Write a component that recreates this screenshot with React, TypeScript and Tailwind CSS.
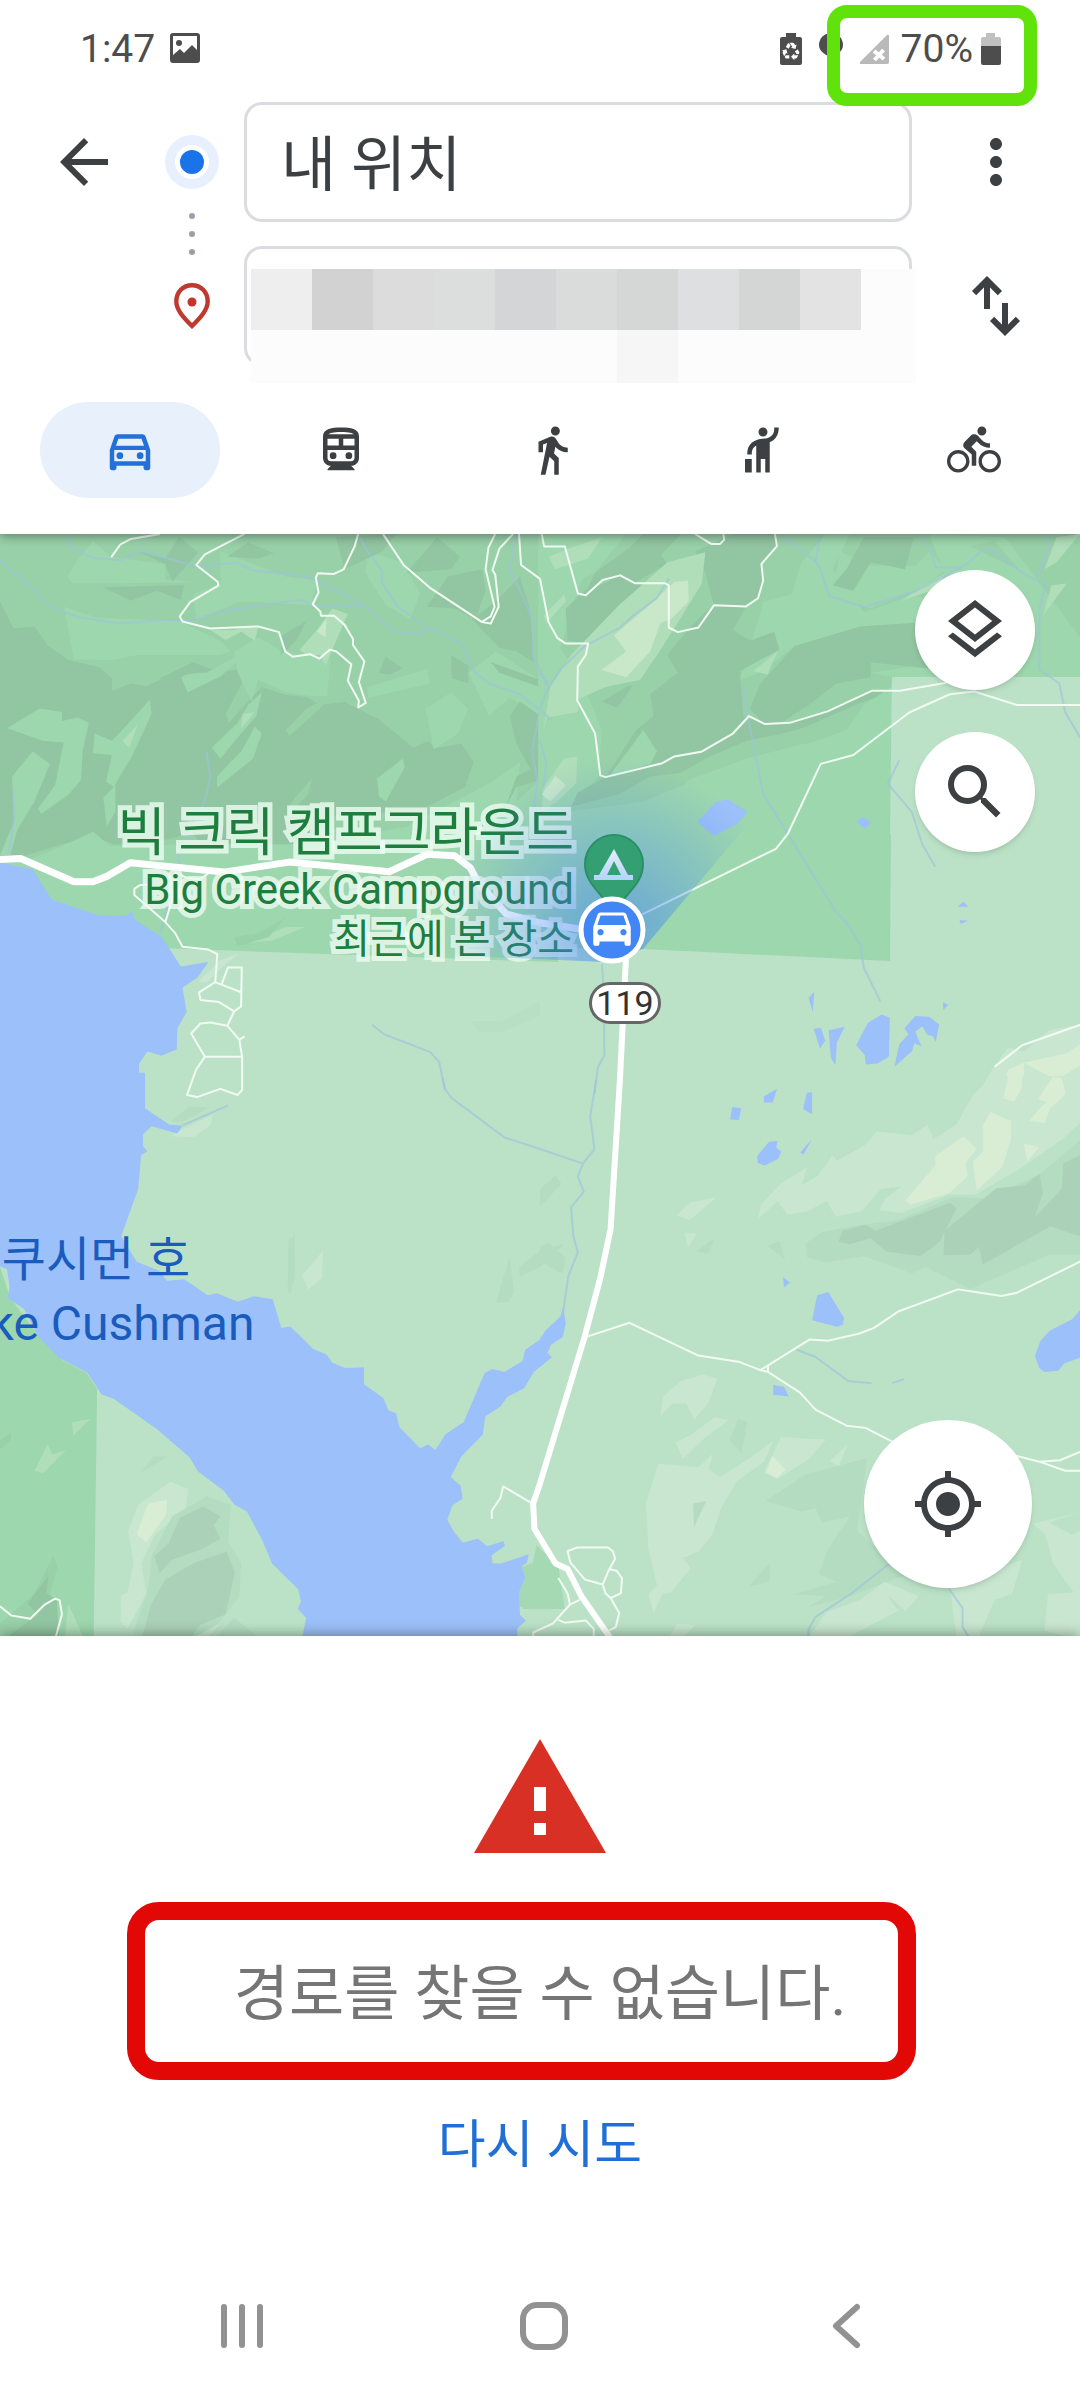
import {
  MdArrowBack,
  MdDirectionsBike,
  MdDirectionsCar,
  MdDirectionsWalk,
  MdHail,
  MdMoreVert,
  MdMyLocation,
  MdOutlineDirectionsCar,
  MdOutlineDirectionsSubway,
  MdOutlineLayers,
  MdRecycling,
  MdSearch,
  MdWarning,
} from 'react-icons/md';
import clsx from 'clsx';
import type { ElementType } from 'react';

interface TravelMode {
  label: string;
  icon: ElementType;
}

const travelModes: TravelMode[] = [
  { label: '자동차', icon: MdOutlineDirectionsCar },
  { label: '대중교통', icon: MdOutlineDirectionsSubway },
  { label: '도보', icon: MdDirectionsWalk },
  { label: '택시', icon: MdHail },
  { label: '자전거', icon: MdDirectionsBike },
];

const mosaicTop = [
  'bg-[#eeeeee]',
  'bg-[#d2d2d2]',
  'bg-[#dddcdc]',
  'bg-[#dcdedd]',
  'bg-[#d4d5d7]',
  'bg-[#dadcdb]',
  'bg-[#d5d7d6]',
  'bg-[#dedfe1]',
  'bg-[#d4d6d5]',
  'bg-[#e3e3e3]',
  'bg-[#fcfcfc]',
];

// The map is four tiles, each with its own coordinate space
const NW = 'translate(0 -4) scale(.3444 .3571)';
const NE = 'translate(540 -4) scale(.3444 .3571)';
const SW = 'translate(0 546) scale(.3444 .3635)';
const SE = 'translate(540 546) scale(.3444 .3635)';

const WATER = '#9cc0f9';
const LIGHT = '#9dd7ae';
const MID = '#98d0a8';
const DARK = '#92c5a1';
const PALE = '#b0deb9';
const SAND = '#c9e7c9';
const L_PALE = '#c9e7d0';
const L_SAND = '#d9edd4';
const L_MID = '#b4dcc1';
const L_DARK = '#abd1b8';

interface TileData {
  transform: string;
  land: [string, string][];
  water: string[];
  streams: string[];
  roads: string[];
}

const tiles: TileData[] = [
  {
    transform: NW,
    land: [
      [MID, '0,0 1600,0 1600,560 1568,900 1200,860 900,830 500,880 100,920 0,930'],
      [DARK, '0,200 40,275 100,270 140,325 200,365 290,385 325,415 325,450 380,430 425,437 500,405 560,390 640,400 690,390 760,440 830,462 890,468 930,490 1000,482 1100,530 1200,610 1245,590 1260,612 1340,598 1375,650 1350,720 1250,770 1200,800 1000,780 900,860 840,890 600,900 560,850 420,880 330,880 270,860 180,880 60,915 0,910'],
      [LIGHT, '185,215 280,245 520,255 640,310 670,340 640,350 400,350 320,365 215,362'],
      [LIGHT, '195,130 225,85 270,30 320,75 480,95 480,140 570,145 340,150 210,150'],
      [LIGHT, '640,60 830,130 920,140 905,210 700,200 570,250 560,180 640,150'],
      [LIGHT, '20,555 115,500 180,510 180,535 225,525 258,540 240,620 235,700 200,740 120,795 110,780 160,715 165,690 185,595 125,590'],
      [LIGHT, '35,690 95,620 145,655 100,760 50,840 30,910 0,910 40,820'],
      [LIGHT, '275,570 325,590 370,545 435,475 440,515 385,630 330,720 308,705 325,630 270,625'],
      [LIGHT, '300,750 335,715 335,790 310,830'],
      [LIGHT, '520,400 600,400 690,350 740,310 700,360 640,410 545,455'],
      [MID, '655,515 710,415 760,440 720,480 665,540'],
      [LIGHT, '615,610 690,540 720,490 760,455 745,520 700,570 640,640'],
      [LIGHT, '630,690 700,620 740,550 760,570 735,640 630,722'],
      [MID, '830,560 890,500 930,480 940,490 840,577'],
      [LIGHT, '680,340 750,300 820,340 960,360 950,465 900,465 830,455 750,420 730,480 690,400'],
      [MID, '835,780 860,745 905,698 895,740 845,790'],
      [LIGHT, '1095,695 1170,640 1175,665 1120,760 1100,745'],
      [LIGHT, '1235,500 1310,455 1360,500 1330,570 1260,615'],
      [LIGHT, '1065,440 1240,390 1250,430 1070,470'],
      [LIGHT, '1070,60 1170,90 1220,180 1190,250 1120,210 1060,120'],
      [LIGHT, '1180,830 1300,770 1420,710 1510,650 1500,760 1568,700 1620,980 1400,930'],
      [LIGHT, '0,920 80,925 180,885 270,845 320,885 600,880 900,880 1180,830 1620,900 1620,1210 440,1170 200,1060'],
      [LIGHT, '1360,400 1440,340 1568,420 1568,520 1480,470 1420,520'],
      [DARK, '400,60 480,80 520,20 575,62 500,145 480,95'],
      [DARK, '660,75 720,35 795,65 750,80'],
      [DARK, '300,160 535,155 525,195 455,170 380,198'],
      [DARK, '465,415 560,370 620,392 540,405 470,440'],
      [DARK, '975,20 1150,11 1110,60 1000,110'],
      [DARK, '1180,120 1270,20 1335,75 1310,110 1240,115'],
      [DARK, '1240,215 1300,130 1400,110 1410,170 1380,250 1320,220'],
      [DARK, '1370,250 1440,200 1510,130 1540,230 1550,370 1500,340 1450,330'],
      [DARK, '1100,400 1120,355 1168,388 1130,405'],
      [DARK, '1425,370 1568,420 1568,440 1450,400'],
      [DARK, '1310,350 1360,380 1360,430 1312,415'],
      [DARK, '1480,520 1510,480 1568,520 1568,700 1500,720 1470,770 1500,690 1540,670 1500,600'],
      [DARK, '815,350 820,295 890,255 860,310'],
      [PALE, '870,335 920,280 965,220 1010,235 985,290 945,380 930,350 890,350'],
      [SAND, '920,285 948,248 945,300'],
      [PALE, '610,280 680,280 700,275 750,272 740,310 700,285 655,308'],
      [PALE, '700,555 705,515 740,510'],
      [PALE, '355,590 400,545 375,610'],
      [PALE, '725,1155 830,1112 885,1112 790,1150'],
      [MID, '680,1140 750,1130 830,1085 780,1140 690,1165'],
      [L_PALE, '575,1265 640,1205 695,1185 650,1220 600,1268'],
      ['#b7dfc4', '1365,1375 1460,1375 1568,1318 1568,1360 1460,1405 1390,1405'],
    ],
    water: [
      '-10,930 95,950 150,1035 290,1080 365,1080 385,1068 390,1090 470,1140 525,1222 605,1210 575,1252 530,1282 542,1350 515,1395 513,1455 468,1472 428,1460 404,1495 404,1528 421,1548 421,1600 -10,1600',
    ],
    streams: [
      'M190 11 205 45 240 65 268 78 350 85 410 58 570 102 690 92 730 112 890 130 1050 205 1145 285 1225 290 1255 275 1340 320 1380 400 1420 430 1510 460 1600 530',
      'M0 85 60 135 155 220 230 245 350 262 470 252 570 252 640 228 870 195 915 212 1050 212',
      'M1045 20 1060 50 1110 115 1110 150 1155 215 1250 280',
      'M600 622 610 690 600 740 580 800 550 850 520 900 520 960',
      'M38 730 42 800 25 910M490 1040 465 1130',
      'M1500 11 1480 110 1520 190 1550 260 1545 350 1590 430',
      'M1565 510 1545 620 1560 700 1550 780 1600 900',
      'M1080 1385 1115 1412 1250 1462 1275 1490 1292 1568',
    ],
    roads: [
      'M465 11 380 25 350 40 323 76',
      'M710 11 595 68 570 98 632 145 634 156 552 202 522 242 530 256 610 276 750 270 810 286 828 340 850 355 900 348 928 360 958 335 977 340 1020 376 1010 422 1042 478 1040 497 1062 484 1042 426 1058 368 1025 322 1025 305 1000 265 970 240 932 240 930 228 908 208 925 175 917 133 923 121 970 123 998 110 1030 45 1040 11',
      'M1112 11 1172 98 1250 163 1400 258 1425 262 1448 215 1438 125 1430 112 1450 52 1490 11M1438 11 1418 50 1410 110 1436 215 1425 242 1398 258',
      'M1507 11 1513 98 1568 137',
      'M430 993 405 995 390 1005 390 1022 480 1098 508 1128 530 1167 605 1175 631 1188 625 1266 578 1295 582 1316 636 1322 680 1348 700 1334 702 1225 662 1225 643 1273 625 1266M643 1273 702 1295M480 1098 500 1035 510 960 545 975 580 978 605 962',
      'M680 1348 660 1388 612 1379 582 1382 555 1410 595 1475 570 1510 543 1582 572 1588 640 1565 690 1582 703 1568 703 1475 695 1428 660 1388M595 1475 703 1475M695 1428 710 1418',
    ],
  },
  {
    transform: NE,
    land: [
      [MID, '-5,0 1568,0 1568,412 1023,412 1000,560 760,600 600,640 300,760 -5,800'],
      [LIGHT, '-5,0 170,11 100,200 60,330 120,420 180,560 170,690 100,760 -5,900'],
      [LIGHT, '110,11 250,11 160,120 100,150 40,40'],
      [LIGHT, '650,200 730,180 760,90 830,11 900,11 850,110 940,230 1090,180 1180,230 1090,262 930,270 740,325 640,400 580,420'],
      [LIGHT, '870,60 960,100 1090,100 1130,60 1180,110 1110,160 960,220 850,180'],
      [LIGHT, '1130,11 1350,20 1568,300 1568,412 1023,412 960,400 1090,380 1400,340 1200,180'],
      [DARK, '160,120 260,50 300,11 410,11 350,70 370,95 270,150 180,138 130,180'],
      [DARK, '450,60 560,11 685,11 690,45 645,95 650,150 635,190 600,212 560,280 610,310 680,285 695,335 580,395 590,520 600,525 650,542 725,540 830,508 965,450 1050,445 940,480 760,555 695,572 600,590 480,640 410,680 320,690 230,740 90,775 110,735 190,692 280,560 330,520 320,460 400,400 370,350 420,290 480,230 505,210 480,120'],
      [DARK, '610,500 640,430 740,325 930,270 1090,260 1200,300 1150,390 960,370 960,412 860,430 780,490 700,540 650,542'],
      [DARK, '75,220 130,170 240,130 280,150 370,150 290,220 200,270 140,318 80,310'],
      [DARK, '940,20 1085,20 1060,110 960,90 910,170 850,155 890,110'],
      [DARK, '180,480 250,440 270,435 225,498'],
      [MID, '1250,45 1320,30 1390,110 1320,80'],
      [LIGHT, '200,690 270,600 300,560 340,620 320,655'],
      [PALE, '10,560 30,440 90,350 150,290 230,210 370,90 480,62 470,150 400,260 340,350 290,420 190,440 110,475 110,510 20,525'],
      [PALE, '25,75 90,50 180,20 140,80 45,110'],
      [PALE, '10,240 70,180 75,200 20,260'],
      [PALE, '1465,110 1500,20 1568,11 1500,90'],
      [PALE, '1460,240 1485,155 1530,150'],
      [PALE, '1050,198 1090,170 1180,120 1150,165'],
      [PALE, '620,395 690,340 660,405'],
      [PALE, '10,720 70,640 108,635 105,710 50,760 5,790'],
      [SAND, '178,392 250,340 215,295 330,200 390,145 430,142 432,200 380,250 350,260 320,340 250,412'],
      [SAND, '5,740 45,688 75,715 30,760'],
      [LIGHT, '110,800 400,740 430,700 600,640 760,605 890,560 940,490 1020,440 1015,1200 300,1170'],
      [L_PALE, '1270,1580 1320,1500 1360,1450 1405,1460 1480,1400 1600,1380 1600,1580'],
      [L_SAND, '1340,1580 1360,1510 1405,1492 1405,1580'],
      [L_SAND, '1405,1492 1530,1465 1600,1420 1600,1480 1500,1540'],
    ],
    water: [
      '457,818 510,762 545,755 602,788 575,822 505,856',
      '918,818 938,803 963,820 943,836',
      '1212,1055 1230,1041 1243,1055',
      '1218,1092 1243,1094 1222,1103',
      '780,1310 796,1294 792,1350',
      '795,1397 816,1394 828,1430 813,1453',
      '838,1401 885,1391 862,1435 858,1498 845,1480',
      '918,1443 952,1380 992,1357 1016,1366 1013,1475 980,1494 946,1497 943,1470',
      '1029,1503 1043,1440 1070,1412 1058,1395 1090,1361 1130,1363 1159,1385 1149,1433 1140,1417 1125,1414 1110,1390 1090,1405 1107,1445 1087,1437 1080,1460',
      '1170,1322 1185,1330 1171,1344',
    ],
    streams: [
      'M700 15 790 80 810 100 840 185 940 216 1090 172 1240 95 1285 55 1310 55 1400 120 1468 155 1450 220 1450 390 1508 430 1525 510 1568 580',
      'M815 15 800 90M1100 15 1130 50 1150 105 1225 105M1480 15 1470 70 1445 130',
      'M375 135 340 190 270 240 230 275 130 325 60 390 20 450 0 500M0 400 25 440',
      'M588 435 605 530 648 740 770 930 860 1070 890 1100 930 1160 940 1225 988 1320',
      'M1043 645 1010 710 1080 790 1110 880 1148 943',
      'M180 1215 185 1290 187 1470 168 1505 158 1580M0 590 18 650 10 720',
    ],
    roads: [
      'M5 11 12 46 72 46 110 178 133 183 182 140 233 127 275 149 362 149 374 155 374 273 400 286 460 273 505 211 598 214 633 191 648 142 643 95 688 45 682 11',
      'M450 11 497 39 523 39 535 27 532 11',
      'M0 137 25 258 50 302 75 318 140 318 133 350 110 382 108 477 160 570 175 687 190 692 355 653 390 634 468 621 560 570 607 521 652 543 725 540 835 508 965 450 1045 450 1180 428',
      'M295 1077 685 893 720 850 815 655 910 630 1072 511 1190 460 1260 452 1385 490 1600 490',
      'M1600 1375 1400 1443 1320 1503',
    ],
  },
  {
    transform: SW,
    land: [
      [LIGHT, '-5,500 30,600 110,700 180,770 250,805 282,850 272,1540 -5,1540'],
      [MID, '-5,995 32,970 32,990 -5,1020'],
      [PALE, '100,1075 138,1002 152,1030 192,1018 125,1082'],
      [PALE, '208,942 263,932 213,978'],
      [MID, '100,1412 155,1308 167,1340 145,1410 60,1540 -5,1540 -5,1500'],
      [DARK, '80,1440 140,1365 135,1412 165,1430 172,1540 10,1540 110,1470'],
      [PALE, '198,1440 245,1540 188,1540'],
      [L_PALE, '372,1240 400,1170 495,1105 546,1125 540,1180 450,1250 410,1330 425,1412 370,1510 350,1490 352,1418 370,1410 388,1330'],
      [L_SAND, '397,1250 430,1165 485,1155 482,1195 425,1272'],
      [L_MID, '440,1310 500,1200 600,1145 670,1170 662,1270 700,1330 695,1420 600,1540 380,1540 430,1400'],
      [L_DARK, '448,1310 490,1275 522,1205 590,1173 640,1200 620,1225 640,1262 580,1293 500,1320 463,1357'],
      [L_DARK, '410,1540 440,1440 480,1375 560,1330 658,1297 682,1355 655,1470 580,1500 550,1540'],
      [L_PALE, '550,1540 640,1493 600,1540'],
      [L_MID, '620,1540 680,1480 760,1540'],
      [L_MID, '835,580 838,440 856,425 855,545 842,592'],
      [L_PALE, '878,537 938,470 935,545 895,576'],
      [L_PALE, '498,155 530,135 618,95 610,125 565,157'],
      [L_MID, '495,115 550,72 610,75 530,115'],
      [L_MID, '1440,612 1480,485 1493,585 1475,612'],
      [L_MID, '1507,515 1568,470 1640,450 1568,515 1510,540'],
      [L_MID, '410,1080 445,1035 490,1035'],
      ['#a5d9b3', '1507,1450 1507,1410 1525,1370 1515,1340 1568,1320 1620,1330 1640,1455'],
    ],
    water: [
      '-10,-20 421,-20 421,78 492,123 530,125 515,147 440,127 415,150 415,182 428,195 410,207 401,300 352,430 397,500 462,525 485,552 535,548 603,592 630,587 690,610 738,595 792,603 817,682 843,678 910,740 948,755 965,778 1003,792 1057,790 1057,837 1113,875 1127,908 1150,917 1160,955 1220,1013 1243,1003 1265,1018 1293,975 1347,940 1407,806 1430,795 1465,803 1517,773 1525,742 1578,708 1580,780 1550,803 1522,848 1473,872 1453,898 1409,926 1402,975 1340,1035 1309,1092 1338,1117 1343,1152 1314,1170 1299,1210 1316,1240 1344,1273 1387,1262 1415,1283 1462,1268 1466,1282 1427,1308 1430,1330 1455,1330 1535,1305 1530,1328 1515,1338 1525,1370 1507,1410 1510,1472 1527,1487 1502,1508 1502,1545 875,1545 889,1480 865,1455 874,1433 865,1400 790,1330 762,1267 717,1187 680,1168 650,1130 575,1077 550,1038 455,960 330,877 295,865 253,805 172,765 110,705 70,630 22,600 28,570 20,520 -10,510',
    ],
    streams: ['M530 125 662 70', 'M1285 -5 1292 25 1312 50 1465 158 1568 190'],
    roads: [
      'M0 1448 33 1473 88 1482 130 1443 160 1427 173 1431 180 1470 161 1535',
      'M1428 1207 1428 1185 1453 1150 1461 1118 1545 1165',
    ],
  },
  {
    transform: SE,
    land: [
      [L_PALE, '635,380 640,345 700,285 775,240 760,290 805,265 850,208 862,222 945,178 978,142 1080,152 1125,123 1142,163 1210,122 1255,45 1310,-10 1600,-10 1600,90 1520,160 1400,240 1265,315 1190,315 1050,365 985,358 1000,330 1050,292 990,300 935,360 860,376 832,333 775,362 718,370 690,333'],
      [L_SAND, '1062,330 1148,235 1148,210 1230,155 1268,190 1235,228 1242,265 1190,310 1075,343'],
      [L_SAND, '1257,225 1287,195 1286,125 1308,88 1368,113 1367,165 1342,240 1268,303'],
      [L_SAND, '1345,50 1360,-10 1400,-10 1398,25 1375,60'],
      [L_SAND, '1447,52 1490,-10 1515,-5 1527,38 1480,80 1465,118 1420,112 1470,60'],
      [L_SAND, '1405,175 1450,185 1415,222'],
      [L_MID, '770,450 820,418 920,400 1040,385 1200,322 1300,325 1450,260 1600,140 1600,480 1480,480 1250,575 1120,515 1080,532 940,485 830,502 775,488'],
      [L_DARK, '867,445 878,415 945,398 975,415 1190,338 1210,352 1160,445 1105,484 1005,472 960,435 900,452'],
      [L_DARK, '1172,482 1175,415 1325,298 1408,290 1450,257 1460,310 1437,377 1515,300 1520,230 1600,190 1600,440 1482,402 1285,508 1275,458 1250,480'],
      [L_PALE, '398,373 435,337 512,323 435,385'],
      [L_PALE, '420,420 455,422 430,460'],
      [L_MID, '452,472 505,437 490,478'],
      [L_MID, '660,457 695,443 712,493'],
      [L_MID, '0,300 45,263 62,285 0,350'],
      [L_MID, '0,460 25,448 75,490 65,532 0,500'],
      [L_PALE, '350,924 357,872 410,828 475,810 514,822 490,887 448,933 424,890 385,890'],
      [L_PALE, '394,997 440,975 508,927 546,937 478,985 415,1042'],
      [L_MID, '550,990 575,933 602,940 585,1028'],
      [L_PALE, '308,1165 343,1056 460,1065 502,1028 490,1070 522,1092 610,1040 677,993 650,1050 570,1105 525,1180 500,1250 460,1297 415,1315 437,1343 380,1410 355,1415 330,1467 315,1415 340,1390 315,1290'],
      [L_MID, '445,1165 483,1158 447,1230'],
      [L_MID, '655,1158 770,1085 950,1040 930,1180 920,1240 980,1290 1120,1340 900,1420 780,1450 830,1420 740,1415 860,1380 810,1360 830,1300 900,1200 820,1218 800,1178 760,1187'],
      [L_PALE, '650,1080 700,982 830,990 780,1043 690,1098'],
      [L_SAND, '657,1080 675,1033 712,1073 688,1095'],
      [L_PALE, '842,1048 893,1003 868,1062'],
      [L_MID, '605,1395 670,1325 665,1380'],
      [L_PALE, '780,1535 830,1465 930,1430 1000,1380 1100,1420 1060,1460 1007,1415 1040,1460 960,1500 880,1540'],
      [L_PALE, '1190,1390 1400,1320 1370,1415 1320,1430 1270,1540 1210,1540'],
      [L_PALE, '1430,1220 1568,1190 1500,1210 1480,1220 1545,1250 1568,1240 1568,1540 1465,1515 1475,1415 1550,1410 1490,1330 1468,1250'],
      [L_PALE, '370,1540 400,1495 450,1500 410,1540'],
      ['#a5d9b3', '-10,1280 50,1335 70,1455 -50,1455'],
    ],
    water: [
      '650,45 688,25 676,62 650,62',
      '558,74 584,78 578,110 552,109',
      '775,35 790,33 790,94 764,80',
      '630,210 665,170 690,168 686,185 700,197 692,217 652,235 633,228',
      '755,200 790,162 765,204',
      '706,542 726,558 708,570',
      '805,592 837,583 883,655 880,673 862,679 790,661',
      '677,839 708,844 723,871 677,866',
      '1437,760 1453,718 1480,690 1545,658 1580,620 1580,760 1522,780 1505,800 1465,803 1450,793',
      '-5,720 15,690 60,650 67,625 75,670 66,707 32,728 22,750 35,763 -5,792',
    ],
    streams: [
      'M163 0 146 100 158 190 125 230 110 265 127 308 90 350 97 430 110 473 82 540 67 640M0 190 125 230',
      'M745 742 800 762 895 828 963 834M1023 834 1057 823',
      'M1015 1330 905 1412 800 1477 780 1510 778 1540M1188 1400 1227 1453 1227 1505 1250 1540',
    ],
    roads: [
      'M130 708 260 668 460 758 580 776 640 798 782 714 838 717 925 698 970 682 1040 637 1214 576 1340 594 1385 585 1600 485',
      'M640 798 662 803 755 860 800 907 890 951 945 957 1030 998 1380 1033 1450 1050 1510 1046 1600 1010M1450 1050 1525 1075 1600 1075M662 785 662 803',
      'M88 1327 80 1296 108 1286 198 1286 212 1297 218 1317 200 1348 182 1388 130 1374 88 1327M200 1345 222 1350 238 1370 235 1412 205 1425 190 1412 182 1388M205 1425 230 1466 220 1505 200 1515',
      'M53 1370 80 1412 87 1443 38 1495 -20 1520 -20 1540M87 1443 115 1430M53 1485 72 1493 133 1487 156 1510 156 1535',
    ],
  },
];

function MapCanvas() {
  return (
    <svg
      className="absolute inset-0 size-full"
      viewBox="0 0 1080 1102"
      preserveAspectRatio="xMidYMid slice"
      fill="none"
      aria-hidden="true"
    >
      <rect width="1080" height="1110" fill="#bbe2c7" />
      <polygon points="0,0 1080,0 1080,143 892,143 890,427 643,415 165,410 0,410" fill={LIGHT} />
      {tiles.map((tile) => (
        <g key={tile.transform} transform={tile.transform}>
          {tile.land.map(([fill, points]) => (
            <polygon key={points} points={points} fill={fill} />
          ))}
        </g>
      ))}
      <polygon points="892,143 1080,143 1080,300 890,300" fill="#bbe2c7" />
      {tiles.map((tile) => (
        <g key={tile.transform} transform={tile.transform} strokeLinejoin="round">
          {tile.streams.map((d) => (
            <path key={d} d={d} stroke="#9cc3dc" strokeWidth="2" strokeOpacity=".65" vectorEffect="non-scaling-stroke" />
          ))}
          {tile.water.map((points) => (
            <polygon key={points} points={points} fill={WATER} />
          ))}
          {tile.roads.map((d) => (
            <path key={d} d={d} stroke="#f1fbf3" strokeWidth="2" vectorEffect="non-scaling-stroke" />
          ))}
        </g>
      ))}
      <g stroke="#fff" strokeLinejoin="round">
        <path
          transform={NW}
          d="M-5 923 60 920 215 985 270 985 310 970 378 932 650 958 840 930 1130 957 1240 908 1320 912 1365 945 1390 990 1470 1075 1568 1100 1700 1120"
          strokeWidth="7"
          vectorEffect="non-scaling-stroke"
        />
        <path
          transform={SE}
          d="M252 -380 232 0 205 410 175 545 130 705 0 1110 -20 1165 -16 1235 45 1330 80 1345 120 1420 208 1540"
          strokeWidth="6"
          vectorEffect="non-scaling-stroke"
        />
      </g>
    </svg>
  );
}

// Heading beam, camp pin and own position: drawn above the place labels
function MapMarkers() {
  return (
    <svg
      className="absolute inset-0 size-full"
      viewBox="0 0 1080 1102"
      preserveAspectRatio="xMidYMid slice"
      fill="none"
      aria-hidden="true"
    >
      <defs>
        <radialGradient id="beam" gradientUnits="userSpaceOnUse" cx="612" cy="396" r="170">
          <stop offset="0" stopColor="#4285f4" stopOpacity=".6" />
          <stop offset=".4" stopColor="#4285f4" stopOpacity=".36" />
          <stop offset="1" stopColor="#4285f4" stopOpacity="0" />
        </radialGradient>
        <linearGradient id="tent" x1="0" y1="0" x2="0" y2="1">
          <stop offset="0" stopColor="#e4f0f8" />
          <stop offset="1" stopColor="#b5d3fa" />
        </linearGradient>
      </defs>
      <path d="M605 428 420 420 380 200 760 160 790 240 643 415z" fill="url(#beam)" />
      <path
        d="M614 301a29 29 0 0 0-29 29c0 12 6 20 14 29 7 8 15 20 15 32 0-12 8-24 15-32 8-9 14-17 14-29a29 29 0 0 0-29-29z"
        fill="#359f74"
        stroke="#2a8f64"
        strokeWidth="2"
      />
      <path d="M614 315 599 341h-5v5h39v-5h-5zM614 327l7 14h-14z" fill="url(#tent)" fillRule="evenodd" />
      <circle cx="612" cy="396" r="31" fill="#4285f4" stroke="#fff" strokeWidth="5" />
      <MdDirectionsCar x="587" y="368" size={50} color="#fff" />
    </svg>
  );
}

function StatusBar() {
  return (
    <div className="flex h-[102px] items-center justify-between pr-[79px] pb-1 pl-20 text-[39px] text-[#4d4d4d]">
      <div className="flex items-center gap-3">
        <span>1:47</span>
        <svg className="size-9" viewBox="0 0 36 36" aria-hidden="true">
          <path
            d="M6 2h24q3 0 3 3v24q0 3-3 3H6q-3 0-3-3V5q0-3 3-3zm0 3v19l7-6 4 4 8-8 5 5V5z"
            fill="currentColor"
            fillRule="evenodd"
          />
          <circle cx="12" cy="12" r="3" fill="currentColor" />
        </svg>
      </div>

      <div className="flex items-center gap-4">
        <div className="relative h-8 w-6">
          <svg className="size-full" viewBox="0 0 24 32" aria-hidden="true">
            <path d="M7 0h10v4h4q2 0 2 2v24q0 2-2 2H3q-2 0-2-2V6q0-2 2-2h4z" fill="currentColor" />
          </svg>
          <MdRecycling className="absolute top-2 left-[2px] size-5 text-white" />
        </div>
        <svg className="h-9 w-6" viewBox="0 0 24 36" aria-hidden="true">
          <path d="M12 2a12 12 0 0 0-12 12c0 6 6 10 12 12 6-2 12-6 12-12A12 12 0 0 0 12 2z" fill="currentColor" />
        </svg>
        <div className="relative flex items-center gap-3">
          <svg className="size-[30px]" viewBox="0 0 30 30" aria-hidden="true">
            <path d="M28 1q2-1 2 1v26q0 2-2 2H2q-2 0-1-2z" fill="#b9b9b9" />
            <path d="m15 17 10 8M24.500 16l-9 10" stroke="#fff" strokeWidth="4" />
          </svg>
          <span>70%</span>
          <svg className="-ml-1 h-8 w-5" viewBox="0 0 20 32" aria-hidden="true">
            <path d="M5 0h9v4h4q2 0 2 2v8H0V6q0-2 2-2h3z" fill="#c0c0c0" />
            <path d="M0 13h20v17q0 2-2 2H2q-2 0-2-2z" fill="currentColor" />
          </svg>
          <div className="absolute -right-9 -left-8 top-1/2 h-[101px] -translate-y-11 rounded-[20px] border-[13px] border-[#5fe30a]" />
        </div>
      </div>
    </div>
  );
}

function RouteForm() {
  return (
    <div className="flex text-[#3c4043]">
      <div className="flex h-[120px] w-[168px] items-center justify-center">
        <button type="button" aria-label="뒤로">
          <MdArrowBack className="size-[72px]" />
        </button>
      </div>

      <div className="flex w-12 flex-col items-center">
        <div className="flex h-[120px] items-center">
          <div className="flex size-[54px] items-center justify-center rounded-full bg-[#e8f0fe]">
            <div className="size-[34px] rounded-full border-5 border-white bg-[#1a73e8]" />
          </div>
        </div>
        <div className="-mt-[9px] flex h-[42px] flex-col gap-3">
          <span className="size-[6px] rounded-full bg-[#9aa0a6]" />
          <span className="size-[6px] rounded-full bg-[#9aa0a6]" />
          <span className="size-[6px] rounded-full bg-[#9aa0a6]" />
        </div>
        <svg className="mt-7 h-[46px] w-9" viewBox="0 0 36 46" fill="none" aria-hidden="true">
          <path
            d="M18 2.200C9 2.200 2.300 9 2.300 18.500 2.300 27 10 35 18 43c8-8 15.700-16 15.700-24.500C33.700 9 27 2.200 18 2.200z"
            stroke="#c0392f"
            strokeWidth="4.400"
          />
          <circle cx="18" cy="19" r="4.500" fill="#c5352b" />
        </svg>
      </div>

      <div className="ml-7 flex flex-1 flex-col gap-6">
        <input
          aria-label="출발지"
          defaultValue="내 위치"
          className="h-[120px] w-full rounded-[18px] border-3 border-[#dadce0] px-[34px] pb-[6px] text-[60px] outline-none"
        />
        <div className="relative">
          <input
            aria-label="도착지"
            className="h-[120px] w-full rounded-[18px] border-3 border-[#dadce0] px-[34px] pb-[6px] text-[60px] outline-none"
          />
          <div className="absolute top-[23px] -right-1 left-[7px] overflow-hidden bg-[#fcfcfc]">
            <div className="flex h-[61px]">
              {mosaicTop.map((color) => (
                <span key={color} className={clsx('w-[61px] shrink-0', color)} />
              ))}
            </div>
            <div className="flex h-[53px]">
              <span className="ml-[366px] w-[61px] bg-[#f6f6f6]" />
            </div>
          </div>
        </div>
      </div>

      <div className="flex w-[168px] flex-col items-center gap-6">
        <button type="button" aria-label="더보기" className="flex h-[120px] items-center">
          <MdMoreVert className="size-[72px]" />
        </button>
        <button type="button" aria-label="출발지와 도착지 바꾸기" className="flex h-[120px] items-center">
          <svg className="size-[72px]" viewBox="0 0 24 24" fill="none" stroke="currentColor" strokeWidth="2">
            <path d="M9 13V3.500M4.700 7.700 9 3.400l4.300 4.300M15 11v9.500M10.700 16.300l4.300 4.300 4.300-4.300" />
          </svg>
        </button>
      </div>
    </div>
  );
}

function TravelModes() {
  return (
    <nav className="grid grid-cols-5 justify-items-center py-9 pl-6">
      {travelModes.map((mode, index) => {
        const Icon = mode.icon;

        return (
          <button
            key={mode.label}
            type="button"
            aria-label={mode.label}
            className={clsx(
              'flex h-24 w-[180px] items-center justify-center rounded-full',
              index === 0 ? 'bg-[#e8f0fc] text-[#2470d8]' : 'text-[#3c4043]'
            )}
          >
            <Icon className="size-[54px]" />
          </button>
        );
      })}
    </nav>
  );
}

const halo = '[paint-order:stroke_fill] [-webkit-text-stroke:10px_rgba(238,252,243,0.8)]';

function RouteMap() {
  return (
    <main className="relative min-h-[900px] flex-1 overflow-hidden">
      <MapCanvas />

      <div className={clsx('absolute top-[270px] right-[506px] text-right text-[#1e7e3e]', halo)}>
        <p className="text-[52px] leading-[60px]">빅 크릭 캠프그라운드</p>
        <p className="text-[42px] leading-[52px]">Big Creek Campground</p>
        <p className="text-[40px] leading-[48px]">최근에 본 장소</p>
      </div>
      <div className="absolute top-[694px] -left-16 w-80 text-center text-5xl leading-[64px] whitespace-nowrap text-[#1a5cbd]">
        <p>쿠시먼 호</p>
        <p>Lake Cushman</p>
      </div>

      <MapMarkers />

      <span className="absolute top-[448px] left-[589px] flex h-[42px] w-[72px] items-center justify-center rounded-full border-3 border-[#666] bg-white text-[34px] text-[#333]">
        119
      </span>

      <div className="absolute top-9 right-[45px] flex flex-col gap-[42px] text-[#3c4043]">
        <button type="button" aria-label="레이어" className="flex size-[120px] items-center justify-center rounded-full bg-white shadow-md">
          <MdOutlineLayers className="size-[72px]" />
        </button>
        <button type="button" aria-label="검색" className="flex size-[120px] items-center justify-center rounded-full bg-white shadow-md">
          <MdSearch className="size-[72px]" />
        </button>
      </div>
      <button
        type="button"
        aria-label="현재 위치"
        className="absolute right-12 bottom-12 flex size-[168px] items-center justify-center rounded-full bg-white text-[#3c4043] shadow-md"
      >
        <MdMyLocation className="size-[72px]" />
      </button>
    </main>
  );
}

function ErrorSheet() {
  return (
    <section className="relative z-10 flex flex-col items-center bg-white pt-[91px] pb-[68px] shadow-[0_-2px_12px_rgba(0,0,0,0.35)]">
      <MdWarning className="size-36 text-[#d93025]" />
      <div className="relative mt-[31px] flex h-[178px] w-full items-center justify-center pt-2">
        <p className="text-6xl text-[#757575]">경로를 찾을 수 없습니다.</p>
        <div className="absolute inset-y-0 right-[164px] left-[127px] rounded-[32px] border-[18px] border-[#e20805]" />
      </div>
      <button type="button" className="mt-7 h-[76px] px-6 text-[52px] leading-[76px] text-[#1f6fd6]">
        다시 시도
      </button>
    </section>
  );
}

function SystemNav() {
  return (
    <footer className="relative z-10 grid h-[148px] grid-cols-3 place-items-center bg-white pr-[83px] pl-[91px] text-[#929292]">
      <button type="button" aria-label="최근 앱">
        <svg className="size-12" viewBox="0 0 48 48" fill="none" stroke="currentColor" strokeWidth="6" strokeLinecap="round">
          <path d="M6 5v38M24 5v38M42 5v38" />
        </svg>
      </button>
      <button type="button" aria-label="홈">
        <svg className="size-12" viewBox="0 0 48 48" fill="none" stroke="currentColor" strokeWidth="6">
          <rect x="3" y="3" width="42" height="42" rx="14" />
        </svg>
      </button>
      <button type="button" aria-label="뒤로 가기">
        <svg className="size-12" viewBox="0 0 48 48" fill="none" stroke="currentColor" strokeWidth="6" strokeLinecap="round" strokeLinejoin="round">
          <path d="M35 5 14 24l21 19" />
        </svg>
      </button>
    </footer>
  );
}

export default function App() {
  return (
    <div className="flex min-h-screen flex-col bg-white font-['Roboto','Noto_Sans_CJK_KR',sans-serif]">
      <header className="relative z-10 bg-white shadow-[0_2px_10px_rgba(0,0,0,0.4)]">
        <StatusBar />
        <RouteForm />
        <TravelModes />
      </header>
      <RouteMap />
      <ErrorSheet />
      <SystemNav />
    </div>
  );
}
